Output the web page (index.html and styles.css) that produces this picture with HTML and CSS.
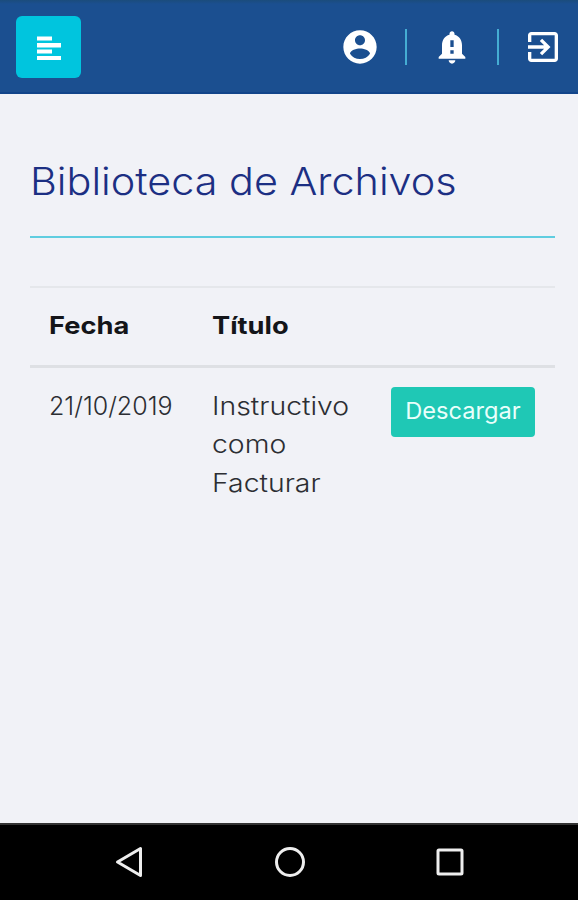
FILE: index.html
```html
<!DOCTYPE html>
<html lang="es">
<head>
<meta charset="utf-8">
<meta name="viewport" content="width=device-width">
<title>Biblioteca de Archivos</title>
<link rel="stylesheet" href="styles.css">
</head>
<body>
<header class="topbar">
  <button class="menu" aria-label="Menú">
    <svg width="24" height="25" viewBox="0 0 24 25"><path d="M0 .5h15v4H0zM0 7h24v4.500H0zM0 13.500h15v4H0zM0 20h24v4H0z"/></svg>
  </button>
  <nav class="actions">
    <svg class="icon" viewBox="0 0 24 24"><path d="M12 2C6.480 2 2 6.480 2 12s4.480 10 10 10 10-4.480 10-10S17.520 2 12 2zm0 3c1.660 0 3 1.340 3 3s-1.340 3-3 3-3-1.340-3-3 1.340-3 3-3zm0 14.200c-2.500 0-4.710-1.280-6-3.220.030-1.990 4-3.080 6-3.080 1.990 0 5.970 1.090 6 3.080-1.290 1.940-3.500 3.220-6 3.220z"/></svg>
    <span class="divider"></span>
    <svg class="icon" viewBox="0 0 24 24"><path d="M18 16v-5c0-3.070-1.640-5.640-4.500-6.320V4c0-.83-.67-1.500-1.500-1.500s-1.500.67-1.500 1.500v.68C7.630 5.360 6 7.920 6 11v5l-2 2v1h16v-1l-2-2zm-5 0h-2v-2h2v2zm0-4h-2V8h2v4zm-1 10c1.100 0 2-.9 2-2h-4c0 1.100.89 2 2 2z"/></svg>
    <span class="divider"></span>
    <svg class="icon" viewBox="0 0 24 24"><path d="M10.090 15.590L11.500 17l5-5-5-5-1.410 1.410L12.670 11H3v2h9.670l-2.580 2.590zM19 3H5c-1.110 0-2 .9-2 2v4h2V5h14v14H5v-4H3v4c0 1.100.89 2 2 2h14c1.100 0 2-.9 2-2V5c0-1.100-.9-2-2-2z"/></svg>
  </nav>
</header>
<main class="content">
  <h1 class="title"><span class="wide-title">Biblioteca de Archivos</span></h1>
  <table class="files">
    <thead>
      <tr><th class="date"><span class="wide">Fecha</span></th><th class="name"><span class="wide">Título</span></th><th></th></tr>
    </thead>
    <tbody>
      <tr>
        <td>21/10/2019</td>
        <td><span class="wide">Instructivo<br>como<br>Facturar</span></td>
        <td class="action"><button class="download"><span class="wide-label">Descargar</span></button></td>
      </tr>
    </tbody>
  </table>
</main>
<footer class="navbar">
  <svg width="28" height="34" viewBox="0 0 28 34"><path d="M2.500 17 25.500 3.500v27z"/></svg>
  <svg width="32" height="34" viewBox="0 0 32 34"><circle cx="16" cy="17" r="13.500"/></svg>
  <svg width="28" height="34" viewBox="0 0 28 34"><rect x="2" y="5" width="24" height="24" rx="1"/></svg>
</footer>
</body>
</html>
```
FILE: styles.css
```css
* { box-sizing: border-box; }
body {
  margin: 0;
  height: 900px;
  display: flex;
  flex-direction: column;
  background: #f1f2f7;
  color: #2c2e33;
  font-family: Inter, sans-serif;
  font-size: 25px;
  font-weight: 300;
}
button { border: 0; padding: 0; font: inherit; }

/* Extended letterforms */
.wide, .wide-title, .wide-label { display: inline-block; transform-origin: left; }
.wide { transform: scaleX(1.135); }
.wide-title { transform: scaleX(1.088); }
.wide-label { transform: scaleX(1.05); transform-origin: center; }

.topbar {
  height: 94px;
  padding: 0 15px 0 16px;
  display: flex;
  align-items: center;
  justify-content: space-between;
  background: linear-gradient(#1b4c7c 0, #1b4f90 4px);
  border-bottom: 2px solid #12458a;
}
.menu {
  width: 65px;
  height: 62px;
  margin-top: 2px;
  border-radius: 6px;
  background: #00c5de;
  display: flex;
  align-items: center;
  justify-content: center;
}
.menu svg { margin-top: 3px; fill: #fff; }
.actions { display: flex; align-items: center; margin-top: 2px; }
.icon { width: 40px; height: 40px; fill: #fff; }
.divider { width: 2px; height: 36px; margin: 0 24.5px 0 25px; background: #45add3; }
.content { flex: 1; padding: 53px 23px 0 30px; }
.title {
  margin: 0 0 48px;
  height: 91px;
  padding-top: 11px;
  border-bottom: 2px solid #5fcde0;
  color: #1c2f83;
  font-size: 38px;
  font-weight: 300;
  line-height: 46px;
  white-space: nowrap;
}
.files {
  width: 525px;
  table-layout: fixed;
  border-collapse: collapse;
  border-top: 2px solid #e5e7eb;
}
.files th {
  height: 79px;
  padding: 0 19px 2px;
  border-bottom: 3px solid #dee0e4;
  text-align: left;
  font-weight: 700;
  font-size: 24px;
  color: #141519;
}
.date { width: 163px; }
.name { width: 179px; }
.files td { padding: 19px 19px; vertical-align: top; line-height: 38.5px; white-space: nowrap; }
.files .action { padding-right: 20px; }
.download {
  display: block;
  width: 144px;
  height: 50px;
  border-radius: 4px;
  background: #1fc8b5;
  color: #e9fffb;
  font-size: 22.5px;
  font-weight: 400;
}
.navbar {
  height: 77px;
  padding: 0 114px 1px 115px;
  border-top: 2px solid #333;
  background: #000;
  display: flex;
  align-items: center;
  justify-content: space-between;
}
.navbar svg { fill: none; stroke: #eee; stroke-width: 3; stroke-linejoin: round; }
```
